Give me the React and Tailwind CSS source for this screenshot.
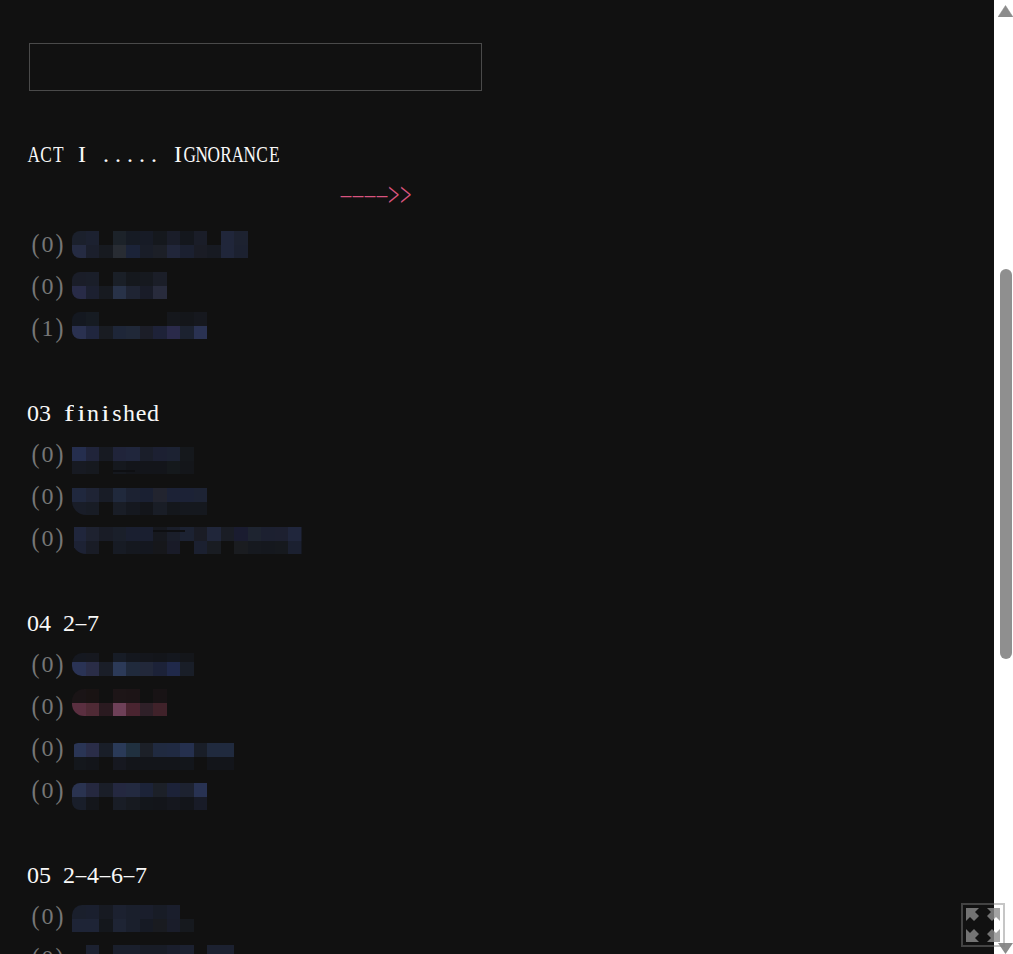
import React from 'react';

const groups = [
  {
    rows: [
      { count: 0, mt: 'mt-[7px]', round: 'rounded-l-[8px]', top: '1b202c 1c2130 111111 1c2229 161b24 171b26 15181d 1a1d29 14171d 1a1d28 111111 20263a 1d2230', bottom: '252b42 1b1f2c 171a20 282c33 1b2338 191d28 1c1f27 21263a 1b2030 1a1c25 171a22 20263a 1c2130' },
      { count: 0, mt: 'mt-[6px]', round: 'rounded-l-[8px]', top: '1a1d28 1a1e29 111111 1a1f27 15181d 16191f 1b1e28', bottom: '282b47 1c2030 171a20 283248 1f2433 191c28 282b3c' },
      { count: 1, mt: 'mt-[4px]', round: 'rounded-l-[8px]', top: '141820 161b22 111111 111111 111111 111111 111111 15171c 14161a 16181e', bottom: '2a3150 20263e 191c22 1e2638 202838 1c1e28 1e2238 2a2a4a 1c2230 2a3252' },
    ],
  },
  {
    title: '03 finished',
    rows: [
      { count: 0, mt: 'mt-[13px]', round: '', top: '252e4e 20243a 171a22 20243a 20263c 1a1e2a 1c2032 1c2232 15181c', bottom: '171a22 16191f 111111 15181e 13151a 13151a 13151a 15191c 14161a', streak: 'left-[41px] top-[23px] w-[22px]' },
      { count: 0, mt: 'mt-[12px]', round: 'rounded-bl-[14px]', top: '20283e 1f2435 181c26 20293c 1c2232 1a2032 22242f 1c2236 1c2236 1d2334', bottom: '191d28 181c25 111111 191d26 15181f 13151a 191d26 14171c 15181e 15181e' },
      { count: 0, mt: 'mt-[9px]', round: 'rounded-bl-[14px] [clip-path:inset(0_0_0_2px)]', top: '20263c 1e2230 191c26 1a1f2a 1a1f30 1a1f30 16181e 1a1e2a 1c2232 1a1c25 20263a 1a1d25 1a1c30 1e2430 1c2030 1d2030 20263c', bottom: '1d2234 191c26 111111 171b24 15181f 14171f 16171b 191b28 111111 1b2030 191c22 111111 1a1c20 16191f 15181e 16191e 1b2030', streak: 'left-[81px] top-[3px] w-[32px]' },
    ],
  },
  {
    title: '04 2-7',
    rows: [
      { count: 0, mt: 'mt-[9px]', round: 'rounded-l-[10px]', topH: 'h-[9px]', top: '151820 16181f 111111 171c26 14171e 14161c 13151a 14171e 14161a', bottom: '2a3355 2a2d47 1a1e28 2c3a58 202a3c 22283a 1c2238 20294a 191e28' },
      { count: 0, mt: 'mt-[3px]', round: 'rounded-l-[12px]', top: '1a1416 191313 111111 1d1517 1c1416 111111 181315', bottom: '5a2f40 4f2a35 2a1a20 6e4058 4a2430 2f2028 40222a' },
      { count: 0, mt: 'mt-[15px]', round: 'rounded-tl-[6px] [clip-path:inset(0_0_0_2px)]', top: '2a3555 2a2d48 191e28 2a3a58 20303f 1c2028 202a40 202a42 25304e 191e28 202a3e 202a3e', bottom: '14171c 13151a 111111 161820 13151a 13151a 13151a 13151a 13161b 111111 13151a 13151a' },
      { count: 0, mt: 'mt-[13px]', round: 'rounded-l-[8px]', top: '2a3350 25283f 1a1e28 242840 232a40 1c2338 1c2028 1c2238 1d2230 283252', bottom: '191e2a 14161b 111111 191d26 171a20 13161b 13151a 15171e 13151a 181b27' },
    ],
  },
  {
    title: '05 2-4-6-7',
    rows: [
      { count: 0, mt: 'mt-[9px]', round: 'rounded-tl-[10px]', top: '1a1f2c 1a1f2e 171a22 1c2130 1a1f2c 1a1e2c 181c26 1a1e2c 111111', bottom: '1e2436 1e2436 14171c 1e2434 1a1f2c 161a24 191b20 1a1d2a 16191e' },
      { count: 0, mt: 'mt-[7px]', round: '', top: '111111 1c2130 111111 1a1f2c 1a1f2c 181c26 181c26 1a1e2c 1c2130 111111 1c2130 1c2130', bottom: '111111 1c2130 111111 1a1f2c 1a1f2c 181c26 181c26 1a1e2c 1c2130 111111 1c2130 1c2130' },
    ],
  },
];

// the original font is fixed pitch, 12px a character: narrow the wide glyphs, widen the thin ones
const glyphClass = (ch) => {
  if (ch === '-') return 'scale-x-[1.75] scale-y-[0.7]';
  if (ch === '>') return 'scale-x-[0.85] scale-y-[1.4]';
  if (ch === '(' || ch === ')') return 'scale-y-[1.1]';
  if (ch === 'f' || ch === 'i') return 'scale-x-[1.25]';
  if (ch >= 'A' && ch <= 'Z' && ch !== 'I') return 'scale-x-[0.72]';
  return '';
};

const Mono = ({ text }) => (
  <>
    {text.split('').map((ch, i) => (
      <span key={i} className="inline-flex justify-center w-[12px]">
        <span className={`inline-block ${glyphClass(ch)}`}>{ch === ' ' ? '\u00a0' : ch}</span>
      </span>
    ))}
  </>
);

const Strip = ({ colors, height = 'h-[13.5px]' }) => (
  <div className={`flex ${height}`}>
    {colors.split(' ').map((c, i) => (
      <div key={i} className="w-[13.5px] shrink-0" style={{ backgroundColor: `#${c}` }} />
    ))}
  </div>
);

const Row = ({ row }) => (
  <div className="flex items-start h-[42px]">
    <span className="text-[#767676] w-[44px] shrink-0 pl-px tracking-[-1px] leading-[40px] whitespace-nowrap">
      <Mono text={`(${row.count})`} />
    </span>
    <div className="relative shrink-0">
      <div className={`${row.mt} ${row.round} overflow-hidden`}>
        <Strip colors={row.top} height={row.topH || 'h-[13.5px]'} />
        <Strip colors={row.bottom} />
      </div>
      {row.streak && <div className={`absolute h-[2px] bg-[#0e0f12] ${row.mt} ${row.streak}`} />}
    </div>
  </div>
);

const ExpandIcon = () => (
  <svg viewBox="0 0 34 34" className="w-[34px] h-[34px]" fill="rgba(140,140,140,0.8)">
    <path d="M0 0H13L9 4L13 8L8 13L4 9L0 13Z" />
    <path d="M34 0H21L25 4L21 8L26 13L30 9L34 13Z" />
    <path d="M0 34H13L9 30L13 26L8 21L4 25L0 21Z" />
    <path d="M34 34H21L25 30L21 26L26 21L30 25L34 21Z" />
  </svg>
);

export default function App() {
  return (
    <div className="h-screen overflow-hidden flex bg-white relative">
      <main
        className="flex-1 bg-[#111111] pl-[28px] text-[24px] text-[#f8f8f8] overflow-hidden"
        style={{ fontFamily: '"Liberation Serif", serif' }}
      >
        <div className="mt-[43px] ml-px w-[453px] h-[48px] border border-[#4a4a4a]" />

        <div className="mt-[43px] h-[41px] leading-[40px] whitespace-nowrap">
          <Mono text="ACT I ..... IGNORANCE" />
        </div>
        <div className="h-[49px] pl-[312px] leading-[40px] text-[#d9547e] whitespace-nowrap">
          <Mono text="---->>" />
        </div>

        {groups.map((group, i) => (
          <section key={i} className={i > 0 ? 'mt-[43px]' : ''}>
            {group.title && (
              <div className="h-[41px] leading-[40px] -ml-px whitespace-nowrap">
                <Mono text={group.title} />
              </div>
            )}
            {group.rows.map((row, j) => (
              <Row key={j} row={row} />
            ))}
          </section>
        ))}
      </main>

      <aside className="w-[19px] shrink-0 bg-white flex flex-col items-end">
        <svg viewBox="0 0 15 12" className="mt-[5px] w-[15px] h-[12px]" fill="#8c8c8c">
          <path d="M7.5 0.5L15 12H0Z" stroke="#8c8c8c" strokeWidth="0.5" />
        </svg>
        <div className="mt-[252px] mr-px w-[12px] h-[390px] rounded-[6px] bg-[#8f8f8f]" />
        <svg viewBox="0 0 15 11" className="mt-auto w-[15px] h-[11px]" fill="#8c8c8c">
          <path d="M0 0H15L7.5 11Z" />
        </svg>
      </aside>

      <button className="absolute left-[961px] top-[903px] w-[44px] h-[44px] border-2 border-[rgba(128,128,128,0.45)] flex items-center justify-center">
        <ExpandIcon />
      </button>
    </div>
  );
}
